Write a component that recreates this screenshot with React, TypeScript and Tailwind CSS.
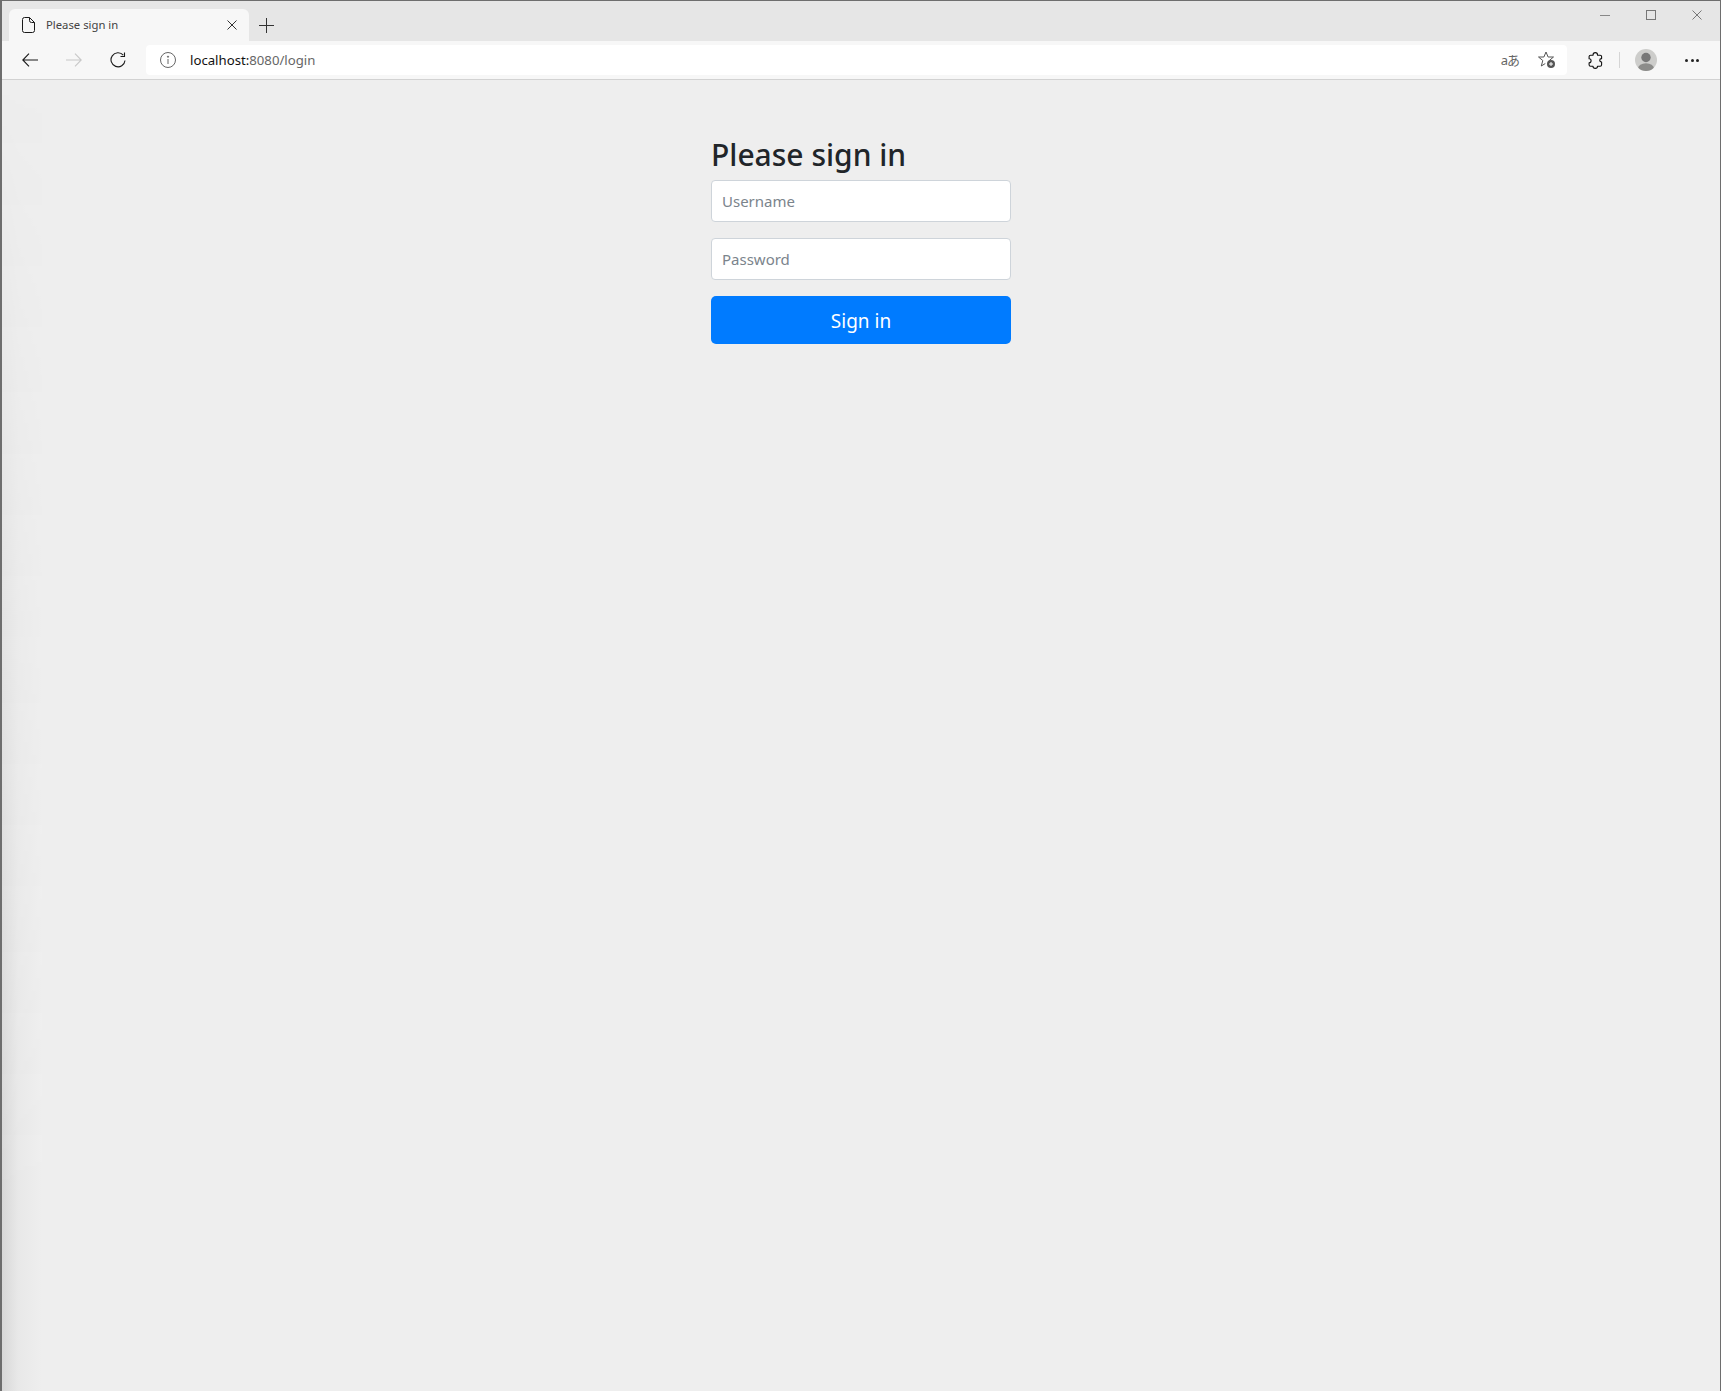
function Avatar() {
  return (
    <svg width="22" height="22" viewBox="0 0 22 22">
      <defs>
        <clipPath id="avatar-clip"><circle cx="11" cy="11" r="11" /></clipPath>
      </defs>
      <g clipPath="url(#avatar-clip)">
        <rect width="22" height="22" fill="#cdcdcb" />
        <circle cx="11" cy="8.500" r="4.700" fill="#777" />
        <ellipse cx="11" cy="19.500" rx="8" ry="5.200" fill="#8c8c8a" />
      </g>
    </svg>
  )
}

function FileIcon() {
  return (
    <svg width="13" height="16" viewBox="0 0 13 16" fill="none" stroke="#1a1a1a" strokeWidth="1">
      <path d="M2.500.5h5l5 5v8a2 2 0 0 1-2 2h-8a2 2 0 0 1-2-2v-11a2 2 0 0 1 2-2z" />
      <path d="M7.500.5v3a2 2 0 0 0 2 2h3" />
    </svg>
  )
}

function CloseIcon({ size, color }: { size: number; color: string }) {
  return (
    <svg width={size} height={size} viewBox={`0 0 ${size} ${size}`} stroke={color} strokeWidth="1" fill="none">
      <path d={`M.5.5l${size - 1} ${size - 1}M${size - 0.5}.5l-${size - 1} ${size - 1}`} />
    </svg>
  )
}

function Arrow({ color, flip }: { color: string; flip?: boolean }) {
  return (
    <svg width="16" height="14" viewBox="0 0 16 14" fill="none" stroke={color} strokeWidth="1.100" className={flip ? '-scale-x-100' : ''}>
      <path d="M16 7H.8M7 .7L.8 7 7 13.300" />
    </svg>
  )
}

function ReloadIcon() {
  return (
    <svg width="16" height="16" viewBox="0 0 16 16" fill="none" stroke="#1a1a1a" strokeWidth="1.100">
      <path d="M13.300 3.200A7 7 0 1 0 15 8.500" />
      <path d="M14.500.5v4h-4" />
    </svg>
  )
}

function InfoIcon() {
  return (
    <svg width="16" height="16" viewBox="0 0 16 16" fill="none" stroke="#666" strokeWidth="1">
      <circle cx="8" cy="8" r="7.500" />
      <path d="M8 7v5" />
      <circle cx="8" cy="4.700" r=".6" fill="#666" />
    </svg>
  )
}

function StarPlusIcon() {
  return (
    <svg width="18" height="18" viewBox="0 0 18 18" fill="none">
      <path d="M8 1l2.100 5h5.400l-4.200 3.500 1.200 2M8 1L5.900 6H.5l4.300 3.500L3.300 15l4-2.500" stroke="#555" strokeWidth="1" strokeLinejoin="round" />
      <circle cx="13" cy="13" r="4" fill="#555" />
      <path d="M13 11v4M11 13h4" stroke="#fff" strokeWidth="1" />
    </svg>
  )
}

function ExtensionIcon() {
  return (
    <svg width="15" height="17" viewBox="0 0 15 17" fill="none" stroke="#111" strokeWidth="1.100" strokeLinejoin="round">
      <path d="M5 3.200C5 1.500 6 .6 7.300.6c1.400 0 2.300 1 2.300 2.600h2.600c.9 0 1.400.6 1.400 1.400v2c-1.400 0-1.900.7-1.900 1.700s.6 1.700 1.900 1.700v2.700c0 .9-.6 1.500-1.500 1.500H9.500c0 1.300-.9 2.200-2.200 2.200s-2.300-.9-2.300-2.200H2.600c-.9 0-1.500-.6-1.500-1.500v-2c1.200 0 2-.8 2-2s-.8-2-2-2V4.600c0-.8.600-1.400 1.500-1.400z" />
    </svg>
  )
}

function TabStrip() {
  return (
    <div className="flex h-[40px] items-end bg-[#e6e6e6] pl-[7px]">
      <div className="flex h-[32px] w-[240px] items-center rounded-t-[6px] bg-[#f7f7f7] pl-[13px] pr-[12px]">
        <FileIcon />
        <span className="ml-[11px] flex-1 text-[11.300px] text-[#444]">Please sign in</span>
        <CloseIcon size={10} color="#333" />
      </div>
      <div className="flex h-[32px] w-[34px] items-center justify-center">
        <svg width="15" height="15" viewBox="0 0 15 15" stroke="#333" strokeWidth="1">
          <path d="M7.500 0v15M0 7.500h15" />
        </svg>
      </div>
      <div className="flex-1" />
      <div className="flex h-[40px] items-start gap-[36px] pr-[18px] pt-[9px]">
        <svg width="10" height="10" viewBox="0 0 10 10" stroke="#888"><path d="M0 5.500h10" /></svg>
        <svg width="10" height="10" viewBox="0 0 10 10" stroke="#777" fill="none"><rect x=".5" y=".5" width="9" height="9" /></svg>
        <CloseIcon size={10} color="#777" />
      </div>
    </div>
  )
}

function Toolbar() {
  return (
    <div className="flex h-[39px] items-center border-b border-[#d2d2d2] bg-[#f7f7f7]">
      <div className="ml-[20px] flex items-center gap-[28px]">
        <Arrow color="#1a1a1a" />
        <Arrow color="#c8c8c8" flip />
        <ReloadIcon />
      </div>
      <div className="ml-[20px] flex h-[30px] flex-1 items-center rounded-[4px] bg-white pl-[14px] pr-[11px]">
        <InfoIcon />
        <span className="ml-[14px] flex-1 pt-[1px] text-[13.200px] text-[#666]">
          <span className="text-[#111]">localhost:</span>8080/login
        </span>
        <span className="font-['Noto_Sans','Noto_Sans_CJK_JP',sans-serif] text-[13px] leading-none tracking-[-1px] text-[#666]">aあ</span>
        <div className="ml-[19px]"><StarPlusIcon /></div>
      </div>
      <div className="ml-[21px] flex items-center">
        <ExtensionIcon />
        <div className="ml-[16px] h-[16px] w-px bg-[#d5d5d5]" />
        <div className="ml-[15px]"><Avatar /></div>
        <div className="ml-[28px] mr-[21px] flex gap-[2.500px]">
          <div className="h-[3px] w-[3px] rounded-full bg-[#222]" />
          <div className="h-[3px] w-[3px] rounded-full bg-[#222]" />
          <div className="h-[3px] w-[3px] rounded-full bg-[#222]" />
        </div>
      </div>
    </div>
  )
}

export default function App() {
  return (
    <div className="flex h-[1391px] flex-col overflow-hidden border-l-2 border-t border-r border-[#6e6e6e] bg-[#eeeeee] font-['Noto_Sans',sans-serif]">
      <TabStrip />
      <Toolbar />
      <main className="relative flex-1 pt-[56px]">
        <div className="absolute inset-y-0 left-0 w-[40px] bg-gradient-to-r from-[#d8d8d8] via-[#e8e8e8] via-40% to-[#eeeeee] [mask-image:linear-gradient(to_bottom,transparent,black_85%)]" />
        <form className="relative mx-auto flex w-[300px] flex-col" onSubmit={e => e.preventDefault()}>
          <h2 className="mb-[6px] text-[30px] font-medium leading-[38px] text-[#212529]">Please sign in</h2>
          <input placeholder="Username" className="h-[42px] rounded-[4px] border border-[#ced4da] bg-white px-[10px] text-[15px] outline-none placeholder:text-[#7b848c]" />
          <input placeholder="Password" className="mt-[16px] h-[42px] rounded-[4px] border border-[#ced4da] bg-white px-[10px] text-[15px] outline-none placeholder:text-[#7b848c]" />
          <button className="mt-[16px] h-[48px] rounded-[5px] bg-[#007bff] pt-[3px] text-[19px] text-white">Sign in</button>
        </form>
      </main>
    </div>
  )
}
